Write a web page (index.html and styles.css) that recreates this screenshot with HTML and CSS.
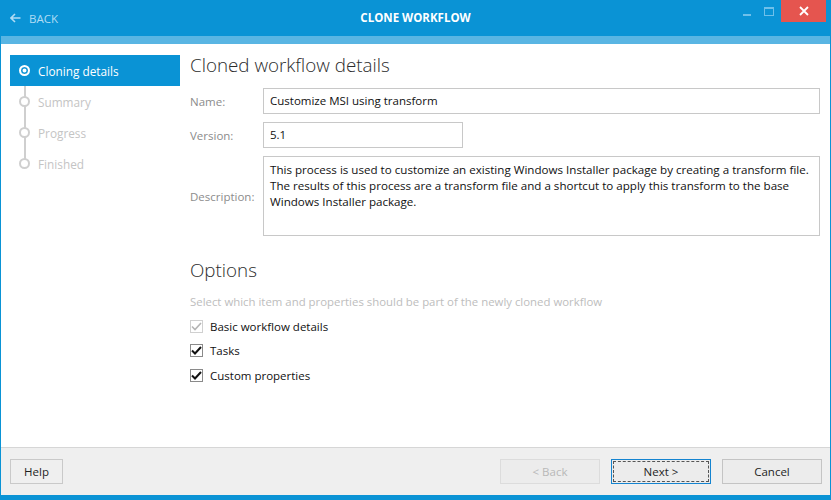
FILE: index.html
```html
<!DOCTYPE html>
<html>
<head>
<meta charset="utf-8">
<link rel="stylesheet" href="styles.css">
</head>
<body>
<div class="window">
  <div class="titlebar">
    <div class="back">
      <svg class="back-arrow" width="11" height="10" viewBox="0 0 11 10"><path d="M5 1 L1 5 L5 9 M1 5 H10.5" fill="none" stroke="#b0dcf4" stroke-width="1.6"/></svg>
      <span>BACK</span>
    </div>
    <div class="title">CLONE WORKFLOW</div>
    <div class="controls">
      <div class="ctl min"><svg width="8" height="2" viewBox="0 0 8 2"><rect width="8" height="2" fill="#6fc0ea"/></svg></div>
      <div class="ctl max"><svg width="10" height="9" viewBox="0 0 10 9"><rect x="0.5" y="0.5" width="9" height="8" fill="none" stroke="#6fc0ea" stroke-width="1"/><rect x="0.5" y="0.5" width="9" height="1.5" fill="#6fc0ea"/></svg></div>
      <div class="ctl close"><svg width="10" height="10" viewBox="0 0 10 10"><path d="M1 1 L9 9 M9 1 L1 9" stroke="#fff" stroke-width="1.8"/></svg></div>
    </div>
  </div>
  <div class="strip"></div>
  <div class="content">
    <div class="sidebar">
      <div class="steps">
        <div class="step active"><span class="dot"></span><span>Cloning details</span></div>
        <div class="step"><span class="dot"></span><span>Summary</span></div>
        <div class="step"><span class="dot"></span><span>Progress</span></div>
        <div class="step"><span class="dot"></span><span>Finished</span></div>
      </div>
    </div>
    <div class="main">
      <h1 class="heading">Cloned workflow details</h1>
      <div class="form">
        <div class="row">
          <label class="label">Name:</label>
          <div class="input wide">Customize MSI using transform</div>
        </div>
        <div class="row">
          <label class="label">Version:</label>
          <div class="input short">5.1</div>
        </div>
        <div class="row desc-row">
          <label class="label">Description:</label>
          <div class="input textarea">This process is used to customize an existing Windows Installer package by creating a transform file. The results of this process are a transform file and a shortcut to apply this transform to the base Windows Installer package.</div>
        </div>
      </div>
      <h1 class="heading options">Options</h1>
      <div class="hint">Select which item and properties should be part of the newly cloned workflow</div>
      <div class="checks">
        <div class="check disabled"><span class="box"><svg width="11" height="9" viewBox="0 0 11 9"><path d="M1 4.5 L4 7.5 L10 1" fill="none" stroke="#b5b5b5" stroke-width="1.6"/></svg></span><span>Basic workflow details</span></div>
        <div class="check"><span class="box"><svg width="11" height="9" viewBox="0 0 11 9"><path d="M1 4.5 L4 7.5 L10 1" fill="none" stroke="#111" stroke-width="2"/></svg></span><span>Tasks</span></div>
        <div class="check"><span class="box"><svg width="11" height="9" viewBox="0 0 11 9"><path d="M1 4.5 L4 7.5 L10 1" fill="none" stroke="#111" stroke-width="2"/></svg></span><span>Custom properties</span></div>
      </div>
    </div>
  </div>
  <div class="footer">
    <div class="btn help">Help</div>
    <div class="spacer"></div>
    <div class="btn nav disabled">&lt; Back</div>
    <div class="btn nav default"><span class="focus">Next &gt;</span></div>
    <div class="btn nav">Cancel</div>
  </div>
</div>
</body>
</html>
```
FILE: styles.css
```css
html, body {
  margin: 0;
  padding: 0;
  background: #ffffff;
}
body {
  font-family: "Open Sans", "Noto Sans", sans-serif;
  font-size: 11.5px;
  color: #1e1e1e;
}
.window {
  width: 831px;
  height: 500px;
  box-sizing: border-box;
  border-left: 1px solid #0a93d5;
  border-right: 1px solid #0a93d5;
  border-bottom: 5px solid #0a93d5;
  display: flex;
  flex-direction: column;
  background: #fff;
}
.titlebar {
  height: 36px;
  background: #0a93d5;
  display: grid;
  grid-template-columns: 1fr auto 1fr;
  align-items: start;
  margin: 0 -1px;
}
.back {
  display: flex;
  align-items: center;
  gap: 8px;
  height: 36px;
  padding-left: 10px;
  color: #b0dcf4;
  font-size: 11.5px;
}
.title {
  text-align: center;
  line-height: 36px;
  color: #fff;
  font-weight: 700;
  font-size: 11.5px;
}
.controls {
  display: flex;
  align-items: flex-start;
  justify-content: flex-end;
  padding-right: 5px;
}
.ctl {
  height: 22px;
  display: flex;
  align-items: center;
  justify-content: center;
}
.ctl.min { width: 22px; padding-top: 8px; box-sizing: border-box; }
.ctl.max { width: 22px; }
.ctl.close { width: 45px; background: #e5554f; margin-left: 1px; }
.strip {
  height: 8px;
  background: #59b5e3;
}
.content {
  flex: 1;
  display: flex;
}
.sidebar {
  width: 179px;
  padding-left: 9px;
  padding-top: 11px;
  box-sizing: border-box;
}
.steps {
  position: relative;
}
.steps::before {
  content: "";
  position: absolute;
  left: 14px;
  top: 16px;
  height: 93px;
  width: 2px;
  background: #cfcfcf;
}
.step {
  position: relative;
  height: 31px;
  display: flex;
  align-items: center;
  gap: 8px;
  padding-left: 9px;
  color: #c4c4c4;
  font-size: 11.8px;
}
.step.active {
  background: #0a93d5;
  color: #fff;
}
.dot {
  width: 7px;
  height: 7px;
  border: 2px solid #cfcfcf;
  border-radius: 50%;
  background: #fff;
  position: relative;
  z-index: 1;
}
.step.active .dot {
  border-color: #fff;
  background: #0a93d5;
  box-shadow: inset 0 0 0 1.5px #0a93d5, inset 0 0 0 4px #fff;
}
.main {
  flex: 1;
  padding-left: 10px;
  padding-right: 10px;
  padding-top: 8px;
}
.heading {
  margin: 0;
  font-weight: 300;
  font-size: 18.8px;
  line-height: 27px;
  color: #2b2b2b;
}
.form {
  margin-top: 9px;
  display: flex;
  flex-direction: column;
  gap: 8px;
}
.row {
  display: flex;
  align-items: center;
}
.label {
  width: 73px;
  color: #8c8c8c;
  font-size: 11.5px;
}
.input {
  border: 1px solid #c8c8c8;
  box-sizing: border-box;
  height: 26px;
  line-height: 24px;
  padding: 0 6px;
  color: #111;
}
.input.wide { width: 557px; }
.input.short { width: 200px; }
.input.textarea {
  width: 557px;
  height: 80px;
  line-height: 16px;
  padding: 5px 6px;
  font-size: 11.6px;
}
.heading.options {
  margin-top: 21px;
}
.hint {
  margin-top: 10px;
  color: #bdbdbd;
  font-size: 11.4px;
}
.checks {
  margin-top: 8px;
  display: flex;
  flex-direction: column;
  gap: 6.5px;
}
.check {
  display: flex;
  align-items: center;
  gap: 7px;
  height: 18px;
  color: #111;
}
.box {
  width: 13px;
  height: 13px;
  box-sizing: border-box;
  border: 1px solid #8a8a8a;
  display: flex;
  align-items: center;
  justify-content: center;
  background: #fff;
}
.check.disabled .box { border-color: #d0d0d0; }
.footer {
  height: 47px;
  border-top: 1px solid #d6d6d6;
  background: #efefef;
  display: flex;
  align-items: center;
  padding: 0 8px 0 9px;
  gap: 11px;
}
.spacer { flex: 1; }
.btn {
  height: 25px;
  box-sizing: border-box;
  border: 1px solid #c9c9c9;
  background: #efefef;
  display: flex;
  align-items: center;
  justify-content: center;
  font-size: 11.5px;
  color: #1e1e1e;
}
.btn.help { width: 53px; }
.btn.nav { width: 100px; border-color: #c4c4c4; background: #ececec; }
.btn.disabled { color: #b8b8b8; border-color: #dcdcdc; }
.btn.default { border-color: #1584d0; padding: 1px; }
.focus {
  flex: 1;
  align-self: stretch;
  display: flex;
  align-items: center;
  justify-content: center;
  border: 1px dashed #555;
}
```
